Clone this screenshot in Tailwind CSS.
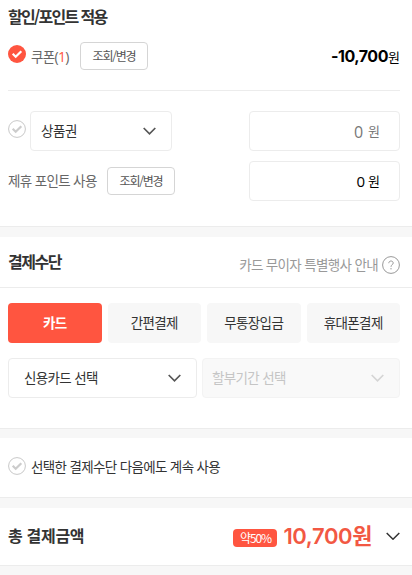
<!DOCTYPE html>
<html lang="ko">
<head>
    <meta charset="UTF-8" />
    <meta name="viewport" content="width=device-width, initial-scale=1.0" />
    <script src="https://cdn.jsdelivr.net/npm/@tailwindcss/browser@4"></script>
    <title>결제</title>
</head>
<body class="bg-[#f7f7f7] font-['Noto_Sans_CJK_KR',sans-serif] text-[13.5px] tracking-[-0.65px] text-[#333]">
    <!-- Discount / points -->
    <section class="h-[227px] border-b border-[#ececec] bg-white pt-1 pr-3 pl-2">
        <h2 class="h-[26px] text-base leading-[25px] font-bold tracking-[-1.7px]">할인/포인트 적용</h2>
        <div class="flex h-[61px] items-start border-b border-[#ececec] pt-3">
            <svg class="mt-[3px] h-[18px] w-[18px]" viewBox="0 0 18 18" fill="none">
                <circle cx="9" cy="9" r="9" fill="#ff5540" />
                <path d="M4.7 8.8l3 3 5.6-5.6" stroke="#fff" stroke-width="2.2" />
            </svg>
            <span class="ml-[5px] w-[49px] leading-7 text-[#666]">쿠폰<span class="font-['Open_Sans','Noto_Sans_CJK_KR',sans-serif] text-sm tracking-[-0.7px]">(<span class="text-[#ff5540]">1</span>)</span></span>
            <button class="h-7 w-[68px] rounded border border-[#d5d5d5] pb-px text-xs tracking-[-1.2px] text-[#555]">조회/변경</button>
            <span class="ml-auto leading-7 tracking-normal text-black"><b class="font-['Inter',sans-serif] text-base font-bold tracking-[-0.45px]">-10,700</b><span class="text-[13px]">원</span></span>
        </div>
        <div class="mt-5 flex h-10 items-center">
            <svg class="-mt-1 h-[18px] w-[18px]" viewBox="0 0 18 18" fill="none">
                <circle cx="9" cy="9" r="8.4" stroke="#c8c8c8" />
                <path d="M4.7 8.8l3 3 5.6-5.6" stroke="#ccc" stroke-width="2.2" />
            </svg>
            <div class="ml-1 flex h-10 w-[142px] items-center justify-between rounded border border-[#ececec] pr-[15px] pl-[10px]">
                <span class="pb-[3px] leading-5 tracking-[-0.4px]">상품권</span>
                <svg class="h-2 w-[13px]" viewBox="0 0 13 8" fill="none"><path d="M.7 1l5.8 5.8L12.3 1" stroke="#555" stroke-width="1.7" /></svg>
            </div>
            <div class="ml-auto flex h-10 w-[151px] items-center justify-end gap-[5px] rounded border border-[#ececec] pr-[19px] tracking-normal text-[#777]"><span class="pt-px font-['Open_Sans',sans-serif] text-base">0</span><span class="text-[13px]">원</span></div>
        </div>
        <div class="mt-[10px] flex h-10 items-center">
            <span class="w-[99px] pb-px text-[#666]">제휴 포인트 사용</span>
            <button class="h-7 w-[68px] rounded border border-[#d5d5d5] pb-px text-xs tracking-[-1.2px] text-[#555]">조회/변경</button>
            <div class="ml-auto flex h-10 w-[151px] items-center justify-end gap-[3px] rounded border border-[#ececec] pr-[19px] tracking-normal text-black"><span class="font-['Open_Sans',sans-serif] text-[15px]">0</span><span class="text-[13px]">원</span></div>
        </div>
    </section>

    <!-- Payment method -->
    <section class="mt-[10px] h-48 border-b border-[#ececec] bg-white">
        <div class="flex h-[51px] items-center border-b border-[#ececec] pr-3 pl-2">
            <h2 class="pb-[2px] text-base leading-6 font-bold tracking-[-1.5px]">결제수단</h2>
            <span class="mt-1 ml-auto text-[#999]">카드 무이자 특별행사 안내</span>
            <svg class="mt-[6px] ml-1 h-[18px] w-[18px]" viewBox="0 0 18 18" fill="none" stroke="#999">
                <circle cx="9" cy="9" r="8.4" />
                <path d="M6.8 7.2c0-1.4 1-2.2 2.2-2.2s2.2.8 2.2 2c0 1.7-2.2 1.8-2.2 3.8M9 12v1.4" />
            </svg>
        </div>
        <div class="grid grid-cols-4 gap-[6px] pt-[15px] pr-3 pl-2">
            <button class="h-10 rounded bg-[#ff5540] pb-px font-bold text-white">카드</button>
            <button class="h-10 rounded bg-[#f7f7f7] pb-px">간편결제</button>
            <button class="h-10 rounded bg-[#f7f7f7] pb-px">무통장입금</button>
            <button class="h-10 rounded bg-[#f7f7f7] pb-px">휴대폰결제</button>
        </div>
        <div class="flex gap-[5px] pt-[15px] pr-3 pl-2">
            <div class="flex h-10 w-[189px] items-center justify-between rounded border border-[#ececec] px-[15px]">
                <span class="pb-px">신용카드 선택</span>
                <svg class="h-2 w-[13px]" viewBox="0 0 13 8" fill="none"><path d="M.7 1l5.8 5.8L12.3 1" stroke="#555" stroke-width="1.7" /></svg>
            </div>
            <div class="flex h-10 flex-1 items-center justify-between rounded border border-[#f3f3f3] bg-[#f9f9f9] pr-[15px] pl-[9px] text-[#c5c5c5]">
                <span class="pb-px">할부기간 선택</span>
                <svg class="h-2 w-[13px]" viewBox="0 0 13 8" fill="none"><path d="M.7 1l5.8 5.8L12.3 1" stroke="#d5d5d5" stroke-width="1.7" /></svg>
            </div>
        </div>
    </section>

    <!-- Remember method -->
    <section class="mt-[9px] flex h-[60px] items-center border-b border-[#ececec] bg-white pr-3 pl-2">
        <svg class="-mt-[3px] h-[18px] w-[18px]" viewBox="0 0 18 18" fill="none">
            <circle cx="9" cy="9" r="8.4" stroke="#c8c8c8" />
            <path d="M4.7 8.8l3 3 5.6-5.6" stroke="#ccc" stroke-width="2.2" />
        </svg>
        <span class="ml-[5px] pb-[2px]">선택한 결제수단 다음에도 계속 사용</span>
    </section>

    <!-- Total -->
    <section class="mt-[10px] flex h-[58px] items-center border-b border-[#ececec] bg-white pr-3 pl-2">
        <h2 class="pb-[3px] text-base font-bold tracking-[-0.3px]">총 결제금액</h2>
        <span class="mt-[3px] ml-auto flex h-[18px] w-11 items-center justify-center rounded bg-[#ff5540] text-xs tracking-[-1.1px] text-white">약50%</span>
        <span class="ml-[6px] pb-[2px] font-['Inter','Noto_Sans_CJK_KR',sans-serif] text-[22px] leading-8 font-semibold tracking-[-0.4px] text-[#f25843]">10,700원</span>
        <svg class="-mt-[2px] ml-[14px] h-2 w-[14px]" viewBox="0 0 14 8" fill="none"><path d="M.7 1L7 7.2 13.3 1" stroke="#333" stroke-width="1.5" /></svg>
    </section>
</body>
</html>
